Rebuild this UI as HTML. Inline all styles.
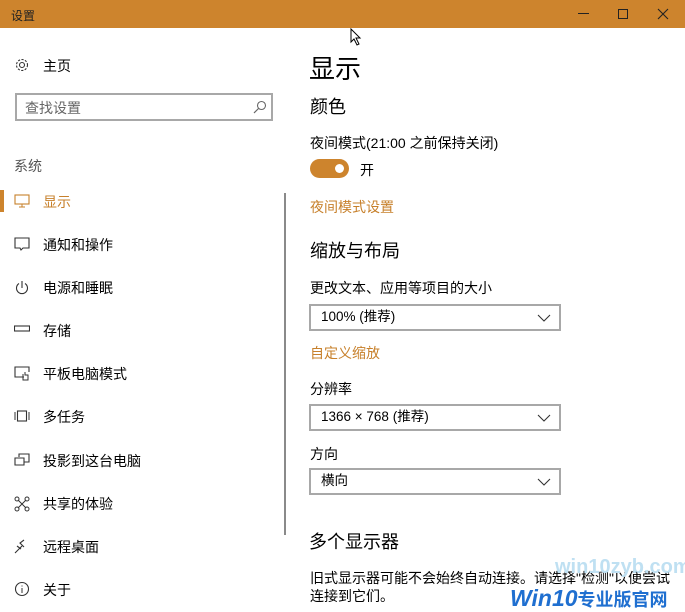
<!DOCTYPE html>
<html><head><meta charset="utf-8"><style>
*{margin:0;padding:0;box-sizing:border-box}
body{width:685px;height:610px;overflow:hidden;background:#fff;font-family:"Liberation Sans","Noto Sans CJK SC",sans-serif;color:#000;position:relative}
.tb{position:absolute;left:0;top:0;width:685px;height:28px;background:#cd842d}
.tb .t{position:absolute;left:11px;top:7px;font-size:12px;color:#222}
.a{position:absolute;white-space:nowrap}
.nav{font-size:14px;left:43px}
.ic{position:absolute;left:14px}
.dd{position:absolute;left:309px;width:252px;height:27px;border:2px solid #a8a8a8;font-size:13.5px;line-height:22px;padding:0 0 0 10px}
.dd svg{position:absolute;right:8px;top:8px}
.or{color:#c7802b}
</style></head><body>
<div class="tb"><span class="t">设置</span>
<div class="a" style="left:578px;top:13px;width:11px;height:1px;background:#222"></div>
<div class="a" style="left:618px;top:9px;width:10px;height:10px;border:1px solid #222"></div>
<svg class="a" style="left:657px;top:8px" width="12" height="12"><path d="M1 1L11 11M11 1L1 11" stroke="#222" stroke-width="1.1"/></svg>
</div>
<svg class="a" style="left:350px;top:28px" width="12" height="18"><path d="M1 1L1 14L4 11L7 17L9 16L6 10L10 10Z" fill="#fff" stroke="#000" stroke-width="1"/></svg>

<svg class="ic" style="top:57px" width="16" height="16" viewBox="0 0 16 16"><circle cx="8" cy="8" r="2.5" fill="none" stroke="#333" stroke-width="1.1"/><circle cx="8" cy="8" r="5.5" fill="none" stroke="#333" stroke-width="1.1" stroke-dasharray="2.2 1.4"/></svg>
<div class="a nav" style="top:56px">主页</div>
<div class="a" style="left:15px;top:93px;width:258px;height:28px;border:2px solid #a8a8a8"></div>
<div class="a" style="left:25px;top:98px;font-size:14px;color:#666">查找设置</div>
<svg class="a" style="left:253px;top:100px" width="14" height="14"><circle cx="8.5" cy="5.5" r="4" fill="none" stroke="#666" stroke-width="1.1"/><path d="M5.5 8.5L1 13" stroke="#666" stroke-width="1.2"/></svg>
<div class="a" style="left:14px;top:156px;font-size:14px;color:#555">系统</div>
<div class="a" style="left:0;top:190px;width:4px;height:22px;background:#cd842d"></div>
<svg class="ic" style="top:194px" width="16" height="14"><rect x="1" y="1" width="14" height="9" fill="none" stroke="#c7802b" stroke-width="1.1"/><path d="M8 10V13M5 13H11" stroke="#c7802b"/></svg>
<div class="a nav or" style="top:192px">显示</div>
<div class="a" style="left:284px;top:193px;width:2px;height:342px;background:#8a8a8a"></div>

<svg class="ic" style="top:237px" width="16" height="16"><path d="M1 1H15V11H9L7 13L6 11H1Z" fill="none" stroke="#333" stroke-width="1.1"/></svg>
<div class="a nav" style="top:235px">通知和操作</div>
<svg class="ic" style="top:280px" width="16" height="16"><path d="M5 3.5A5.5 5.5 0 1 0 11 3.5M8 1V8" fill="none" stroke="#333" stroke-width="1.1"/></svg>
<div class="a nav" style="top:278px">电源和睡眠</div>
<svg class="ic" style="top:324px" width="16" height="10"><rect x="0.5" y="2" width="15" height="5" fill="none" stroke="#333" stroke-width="1.1"/></svg>
<div class="a nav" style="top:321px">存储</div>
<svg class="ic" style="top:366px" width="16" height="16"><path d="M10 11H1V1H15V6" fill="none" stroke="#333" stroke-width="1.1"/><path d="M9 8V14H14V9H11V6" fill="none" stroke="#333"/></svg>
<div class="a nav" style="top:364px">平板电脑模式</div>
<svg class="ic" style="top:410px" width="16" height="12"><rect x="3.5" y="1" width="9" height="10" fill="none" stroke="#333" stroke-width="1.1"/><path d="M1 2V10M15 2V10" stroke="#333"/></svg>
<div class="a nav" style="top:407px">多任务</div>
<svg class="ic" style="top:453px" width="16" height="14"><path d="M5 4V1H15V9H10M1 5H10V12H1Z" fill="none" stroke="#333" stroke-width="1.1"/></svg>
<div class="a nav" style="top:451px">投影到这台电脑</div>
<svg class="ic" style="top:496px" width="16" height="16"><path d="M4 4L12 12M12 4L4 12" stroke="#333"/><circle cx="3" cy="3" r="2" fill="none" stroke="#333"/><circle cx="13" cy="3" r="2" fill="none" stroke="#333"/><circle cx="3" cy="13" r="2" fill="none" stroke="#333"/><circle cx="13" cy="13" r="2" fill="none" stroke="#333"/></svg>
<div class="a nav" style="top:494px">共享的体验</div>
<svg class="ic" style="top:538px" width="16" height="16"><path d="M1 15L8 8M10 2L6 5L10 9M3 8L7 11" fill="none" stroke="#333" stroke-width="1.1"/></svg>
<div class="a nav" style="top:537px">远程桌面</div>
<svg class="ic" style="top:581px" width="16" height="16"><circle cx="8" cy="8" r="6.5" fill="none" stroke="#333" stroke-width="1.1"/><path d="M8 7V12M8 4.5V5.5" stroke="#333"/></svg>
<div class="a nav" style="top:580px">关于</div>

<div class="a" style="left:309px;top:49px;font-size:26px">显示</div>
<div class="a" style="left:310px;top:93px;font-size:18px">颜色</div>
<div class="a" style="left:310px;top:133px;font-size:14px">夜间模式(21:00 之前保持关闭)</div>
<div class="a" style="left:310px;top:159px;width:39px;height:19px;border-radius:10px;background:#cd842d"></div>
<div class="a" style="left:335px;top:164px;width:9px;height:9px;border-radius:50%;background:#fff"></div>
<div class="a" style="left:360px;top:160px;font-size:14px">开</div>
<div class="a or" style="left:310px;top:197px;font-size:14px">夜间模式设置</div>
<div class="a" style="left:310px;top:237px;font-size:18px">缩放与布局</div>
<div class="a" style="left:310px;top:278px;font-size:14px">更改文本、应用等项目的大小</div>
<div class="dd" style="top:304px">100% (推荐)<svg width="14" height="8"><path d="M1 1L7 7L13 1" fill="none" stroke="#333" stroke-width="1.1"/></svg></div>
<div class="a or" style="left:310px;top:343px;font-size:14px">自定义缩放</div>
<div class="a" style="left:310px;top:379px;font-size:14px">分辨率</div>
<div class="dd" style="top:404px">1366 × 768 (推荐)<svg width="14" height="8"><path d="M1 1L7 7L13 1" fill="none" stroke="#333" stroke-width="1.1"/></svg></div>
<div class="a" style="left:310px;top:444px;font-size:14px">方向</div>
<div class="dd" style="top:468px">横向<svg width="14" height="8"><path d="M1 1L7 7L13 1" fill="none" stroke="#333" stroke-width="1.1"/></svg></div>
<div class="a" style="left:309px;top:528px;font-size:18px">多个显示器</div>
<div class="a" style="left:310px;top:568px;font-size:14px">旧式显示器可能不会始终自动连接。请选择"检测"以便尝试</div>
<div class="a" style="left:310px;top:586px;font-size:14px">连接到它们。</div>
<div class="a" style="left:555px;top:556px;font-size:20px;color:#bfe0f2;font-weight:bold">win10zyb.com</div>
<div class="a" style="left:510px;top:585px;font-size:23px;color:#1f6fd0;font-weight:bold;font-style:italic">Win10<span style="font-size:18px;font-style:normal">专业版官网</span></div>
</body></html>
